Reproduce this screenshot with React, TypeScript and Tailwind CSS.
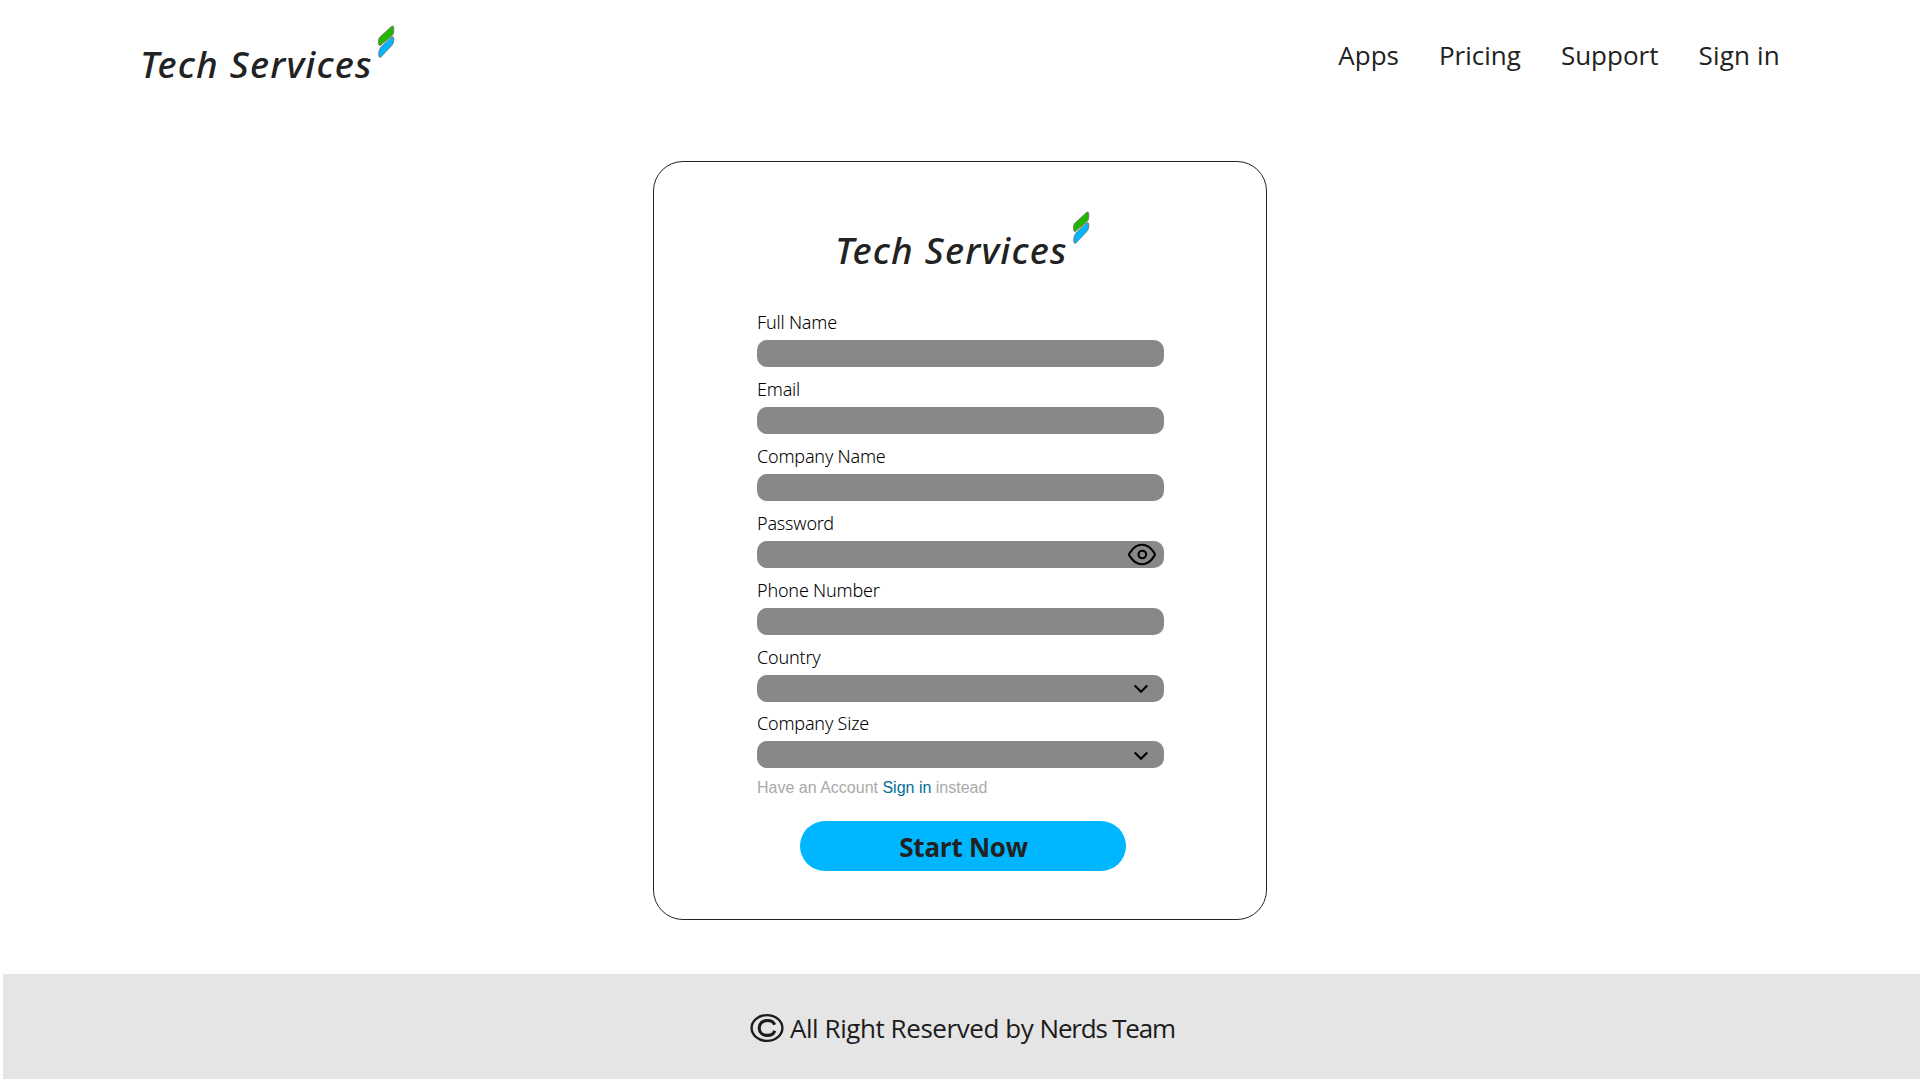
import React from "react";

function Logo() {
  return (
    <div className="flex h-[62px] w-[254px] items-start text-[#222222]">
      <span className="w-[238px] shrink-0 whitespace-nowrap pt-[15px] font-['Noto_Sans'] text-[37px] leading-[48px] font-medium italic tracking-[1.2px]">
        Tech Services
      </span>
      <svg className="h-[34px] w-[17px] shrink-0" viewBox="0 0 17 34" stroke="#777777" strokeWidth="0.9">
        <path d="M14 1Q15.8 0.5 15.8 3V6Q15.8 9.5 13 11.8L1.9 20.8Q0.5 20.3 0.5 17.5V15.5Q0.5 13.5 2 12Z" fill="#22b600" />
        <path d="M14 11.8Q15.8 11.2 15.8 13.5V15Q15.8 18.5 13.6 20.8L2.3 32.6Q0.8 32.3 0.8 30.5V28Q0.8 24.5 3 22Z" fill="#00b7ff" />
      </svg>
    </div>
  );
}

function Eye() {
  return (
    <svg className="mr-2 h-[23px] w-[28px]" viewBox="0 0 28 23" fill="none" stroke="#000" strokeWidth="2.1">
      <path d="M1 11.5Q0.9 10.8 2 9.6C5.4 4.2 9.4 1.7 14 1.7S22.6 4.2 26 9.6Q27.6 11.5 26 13.4C22.6 18.8 18.6 21.3 14 21.3S5.4 18.8 2 13.4Q0.9 12.2 1 11.5Z" />
      <circle cx="14.3" cy="11.5" r="3.8" />
    </svg>
  );
}

function Chevron() {
  return (
    <svg className="mr-4 h-[10px] w-[14px]" viewBox="0 0 14 10" fill="none" stroke="#000" strokeWidth="2.2">
      <path d="M0.7 1.5L7 7.7L13.3 1.5" />
    </svg>
  );
}

function Field({ label, icon }: { label: string; icon?: React.ReactNode }) {
  return (
    <label className="flex flex-col gap-1.5">
      <span className="h-6 font-['Noto_Sans'] text-[18px] leading-6 font-[350] tracking-[-0.2px] text-black">{label}</span>
      <span className="flex h-[27px] items-center justify-end rounded-[10px] bg-[#888888]">{icon}</span>
    </label>
  );
}

export default function App() {
  return (
    <div className="flex h-[1080px] w-[1920px] flex-col overflow-hidden bg-white font-['Open_Sans',sans-serif] text-[#222222]">
      <header className="flex h-[161px] shrink-0 items-start justify-between pt-[25px] pr-[140px] pl-[140px]">
        <Logo />
        <nav className="flex gap-10 pt-[10px] text-[26px] leading-10">
          <a>Apps</a>
          <a>Pricing</a>
          <a>Support</a>
          <a className="tracking-[0.2px]">Sign in</a>
        </nav>
      </header>

      <main className="mx-auto flex h-[759px] w-[614px] shrink-0 flex-col rounded-[30px] border border-[#222222] pt-[49px] pr-[102px] pl-[103px]">
        <div className="flex h-[99px] shrink-0 pl-[78px]">
          <Logo />
        </div>
        <div className="flex flex-col gap-2.5">
          <Field label="Full Name" />
          <Field label="Email" />
          <Field label="Company Name" />
          <Field label="Password" icon={<Eye />} />
          <Field label="Phone Number" />
          <Field label="Country" icon={<Chevron />} />
        </div>
        <div className="mt-[9px]">
          <Field label="Company Size" icon={<span className="flex pt-0.5"><Chevron /></span>} />
        </div>
        <p className="mt-[8px] font-['Liberation_Sans'] text-base leading-6 text-[#a9a9a9]">
          Have an Account <a className="text-[#006e99]">Sign in</a> instead
        </p>
        <button className="mt-[21px] ml-[43px] h-[50px] w-[326px] shrink-0 rounded-full bg-[#00b7ff] pt-0.5 pl-px text-[26px] leading-[48px] font-bold tracking-[-0.25px]">
          Start Now
        </button>
      </main>

      <footer className="mt-[54px] ml-[3px] flex h-[105px] items-start bg-[#e5e5e5] pl-[747px] text-[#1c1c1c]">
        <svg className="mt-[39px] h-[30px] w-[34px] shrink-0" viewBox="0 0 34 30" fill="none" stroke="#1c1c1c">
          <ellipse cx="17" cy="15" rx="15.4" ry="12.9" strokeWidth="2.4" />
          <path d="M24.6 11.7C23.6 8.9 20.8 7.5 17.5 7.5C12.6 7.5 9.2 10.4 9.2 15S12.6 22.4 17.5 22.4C21 22.4 23.8 20.8 24.7 17.7" strokeWidth="3.1" />
        </svg>
        <span className="mt-[34px] ml-[6px] text-[26px] leading-10 tracking-[-0.44px]">
          All Right Reserved by <span className="tracking-[-1.2px]">Nerds Team</span>
        </span>
      </footer>
    </div>
  );
}
